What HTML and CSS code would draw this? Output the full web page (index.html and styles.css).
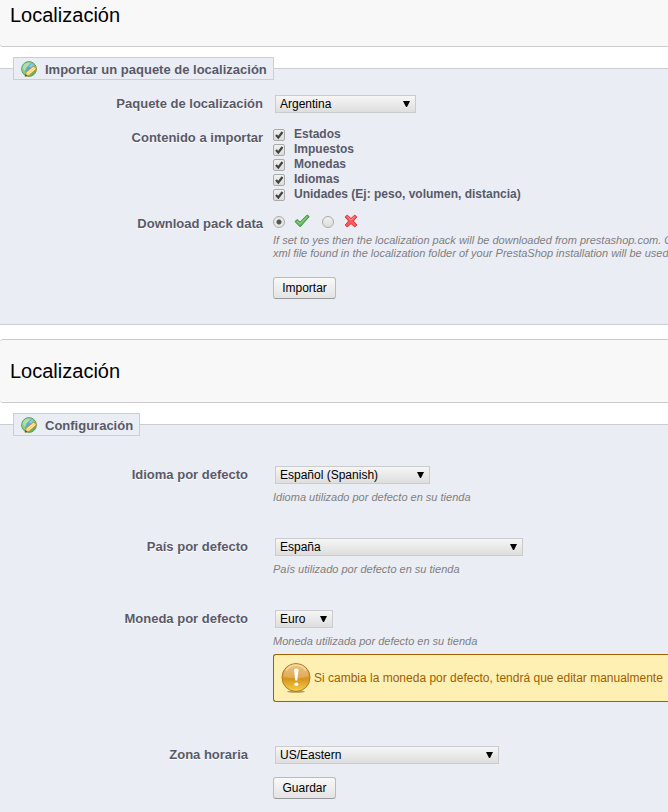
FILE: index.html
```html
<!DOCTYPE html>
<html lang="es">
<head>
  <meta charset="UTF-8">
  <title>Localización</title>
  <link rel="stylesheet" href="styles.css">
</head>
<body>
  <!-- shared icons -->
  <svg class="defs" width="0" height="0" aria-hidden="true">
    <defs>
      <linearGradient id="gGlobe" x1="0" y1="0" x2="1" y2="1">
        <stop offset="0" stop-color="#b9e2b4"/>
        <stop offset="1" stop-color="#4fa552"/>
      </linearGradient>
      <linearGradient id="gWarn" x1="0" y1="0" x2="0" y2="1">
        <stop offset="0" stop-color="#e8b765"/>
        <stop offset="0.45" stop-color="#dc9c36"/>
        <stop offset="0.55" stop-color="#d6951c"/>
        <stop offset="1" stop-color="#f6d148"/>
      </linearGradient>
      <symbol id="globe" viewBox="0 0 16 16">
        <circle cx="8" cy="8" r="7.4" fill="url(#gGlobe)" stroke="#58a35c"/>
        <path d="M4 11 Q5 6 10 2.2 Q13.5 4 14 6 L6 12 Z" fill="#58abd9"/>
        <path d="M2 7 Q3 3 7 2 L9 2 L7 5 L5 6 L4 10 Z" fill="#b5e0ac"/>
        <path d="M8 5 L11 2.5 L13 4.5 L10 7 Z" fill="#8bc9e8"/>
        <path d="M4 15.2 L5 11.3 L12 5.4 Q15 5 15.3 8 L8 14.4 Z" fill="#f6d36c" stroke="#bd8a32" stroke-width="0.8"/>
        <path d="M6 12 L13 6.6 M7.2 13.4 L14.2 7.8" stroke="#fff0b0" stroke-width="0.9"/>
        <path d="M3.8 15.6 L4.5 12.9 L6.6 14.8 Z" fill="#70442a"/>
      </symbol>
    </defs>
  </svg>

  <div class="toolbar toolbar-first">
    <h3>Localización</h3>
  </div>

  <form class="import">
    <fieldset>
      <legend><svg class="icon" width="16" height="16"><use href="#globe"/></svg>Importar un paquete de localización</legend>

      <div class="row">
        <label class="name" for="pack">Paquete de localización</label>
        <div class="field">
          <select id="pack" class="w-pack"><option>Argentina</option></select>
        </div>
      </div>

      <div class="row row-content">
        <span class="name">Contenido a importar</span>
        <div class="field checks">
          <label><input type="checkbox" checked>Estados</label>
          <label><input type="checkbox" checked>Impuestos</label>
          <label><input type="checkbox" checked>Monedas</label>
          <label><input type="checkbox" checked>Idiomas</label>
          <label><input type="checkbox" checked>Unidades (Ej: peso, volumen, distancia)</label>
        </div>
      </div>

      <div class="row row-download">
        <span class="name">Download pack data</span>
        <div class="field">
          <div class="radios">
            <input type="radio" name="download" id="download_yes" checked>
            <label for="download_yes" aria-label="Yes">
              <svg width="16" height="16" viewBox="0 0 16 16"><path d="M1 8.6 L3.2 6.6 L6 9.2 L13.2 2 L15.2 3.6 L6.2 13.8 Z" fill="#63bb5d" stroke="#3b8c3a" stroke-linejoin="round"/><path d="M3 8 L6 10.8 L13.2 3.4" fill="none" stroke="#93d88c"/></svg>
            </label>
            <input type="radio" name="download" id="download_no">
            <label for="download_no" aria-label="No">
              <svg width="16" height="16" viewBox="0 0 16 16"><path d="M2.2 4 L4.2 2 L8 5.6 L11.8 2 L13.8 4 L10.4 8 L13.8 12 L11.8 14 L8 10.6 L4.2 14 L2.2 12 L5.6 8 Z" fill="#f9585a" stroke="#dc3540" stroke-linejoin="round"/><path d="M4.2 3.6 L8 7.2 L11.8 3.6" fill="none" stroke="#ff9292"/></svg>
            </label>
          </div>
          <p class="hint">If set to yes then the localization pack will be downloaded from prestashop.com. Otherwise<br>xml file found in the localization folder of your PrestaShop installation will be used.</p>
          <button type="button" class="btn">Importar</button>
        </div>
      </div>
    </fieldset>
  </form>

  <div class="toolbar">
    <h3>Localización</h3>
  </div>

  <form class="config">
    <fieldset>
      <legend><svg class="icon" width="16" height="16"><use href="#globe"/></svg>Configuración</legend>

      <div class="row">
        <label class="name" for="lang">Idioma por defecto</label>
        <div class="field">
          <select id="lang" class="w-lang"><option>Español (Spanish)</option></select>
          <p class="hint">Idioma utilizado por defecto en su tienda</p>
        </div>
      </div>

      <div class="row">
        <label class="name" for="country">País por defecto</label>
        <div class="field">
          <select id="country" class="w-country"><option>España</option></select>
          <p class="hint">País utilizado por defecto en su tienda</p>
        </div>
      </div>

      <div class="row">
        <label class="name" for="currency">Moneda por defecto</label>
        <div class="field">
          <select id="currency" class="w-currency"><option>Euro</option></select>
          <p class="hint">Moneda utilizada por defecto en su tienda</p>
          <div class="warn">
            <svg width="30" height="30" viewBox="0 0 30 30">
              <ellipse cx="15" cy="28.6" rx="9" ry="1.2" fill="#b09a62"/>
              <circle cx="15" cy="14.5" r="14" fill="url(#gWarn)" stroke="#b27a2c"/>
              <path d="M2.5 14 A12.5 12.5 0 0 1 27.5 13 Q19 17 2.5 14 Z" fill="#fff" opacity="0.18"/>
              <path d="M5 7.5 A12.3 12.3 0 0 1 25 7.5" fill="none" stroke="#f5d9a4" stroke-width="1.5"/>
              <path d="M13 6.5 Q15.3 4.6 17.6 6.5 L16.3 17.5 H14.3 Z" fill="#fff"/>
              <ellipse cx="15.3" cy="21.2" rx="2.1" ry="1.7" fill="#fff"/>
            </svg>
            <span>Si cambia la moneda por defecto, tendrá que editar manualmente</span>
          </div>
        </div>
      </div>

      <div class="row">
        <label class="name" for="timezone">Zona horaria</label>
        <div class="field">
          <select id="timezone" class="w-zone"><option>US/Eastern</option></select>
          <button type="button" class="btn">Guardar</button>
        </div>
      </div>
    </fieldset>
  </form>
</body>
</html>
```
FILE: styles.css
```css
body {
  margin: 0;
  background: #fff;
  font-family: Arial, "Liberation Sans", sans-serif;
  font-size: 12px;
  color: #000;
  overflow: hidden;
}
.defs {
  position: absolute;
}

/* title bars */
.toolbar {
  box-sizing: border-box;
  padding: 20px 10px;
  background: #f8f8f8;
  border-top: 1px solid #ccc;
  border-bottom: 1px solid #ccc;
  border-radius: 3px 0 0 3px;
}
.toolbar-first {
  padding-top: 4px;
  border-top: 0;
  border-radius: 0 0 0 3px;
}
.toolbar h3 {
  margin: 0;
  font-size: 20px;
  line-height: 22px;
  font-weight: normal;
}

/* panels */
fieldset {
  min-width: 0;
  margin: 10px 0 14px;
  padding: 0 0 25px 13px;
  background: #ebedf4;
  border: 1px solid #ccced7;
  border-width: 1px 0;
}
legend {
  display: flex;
  align-items: center;
  box-sizing: border-box;
  height: 23px;
  padding: 2px 6px 0 7px;
  background: #ebedf4;
  border: 1px solid #ccced7;
  font-size: 13px;
  font-weight: bold;
  color: #585a69;
}
.icon {
  margin: 0 8px 2px 0;
}
.row {
  display: flex;
  gap: 10px;
}
.name {
  flex: none;
  width: 250px;
  text-align: right;
  font-size: 13px;
  line-height: 18px;
  font-weight: bold;
  color: #585a69;
  text-shadow: 0 1px 0 #fff;
}
.field {
  flex: 1;
  min-width: 0;
  white-space: nowrap;
}
.import .row {
  padding-top: 15px;
}
.import .row-content {
  padding-top: 13px;
}
.row-content .name {
  padding-top: 3px;
}
.import .row-download {
  padding-top: 14px;
}
.config .row {
  gap: 25px;
  padding-top: 30px;
}
.config .name {
  width: 235px;
}
.config .row + .row {
  padding-top: 34px;
}
.config .row:last-child {
  padding-top: 44px;
}

/* controls */
select {
  display: block;
  appearance: none;
  box-sizing: border-box;
  height: 18px;
  margin: 0 2px;
  padding: 0 16px 0 4px;
  border: 1px solid #ccc;
  border-radius: 0;
  background: url("data:image/svg+xml,%3Csvg xmlns='http://www.w3.org/2000/svg' width='7' height='6'%3E%3Cpath d='M0 0h7L4 6H3z'/%3E%3C/svg%3E") no-repeat right 5px center, linear-gradient(#f6f6f6, #dedede);
  font: 12px Arial, "Liberation Sans", sans-serif;
  color: #000;
}
.w-pack { width: 141px; }
.w-lang { width: 155px; }
.w-country { width: 248px; }
.w-currency { width: 58px; }
.w-zone { width: 224px; }

.checks label {
  display: flex;
  align-items: center;
  height: 15px;
  font-weight: bold;
  color: #585a69;
}
input {
  appearance: none;
  box-sizing: border-box;
  flex: none;
  width: 12px;
  height: 12px;
  margin: 0;
  border: 1px solid #aaa;
  background: linear-gradient(#f0f0f0, #dcdcdc);
}
input[type="checkbox"] {
  margin: 3px 9px 0 0;
  border-radius: 2px;
}
input[type="checkbox"]:checked {
  background: url("data:image/svg+xml,%3Csvg xmlns='http://www.w3.org/2000/svg' width='10' height='10'%3E%3Cpath d='M2 5l2.3 2.5L8.5 2' fill='none' stroke='%23444' stroke-width='2.2'/%3E%3C/svg%3E") no-repeat center, linear-gradient(#f0f0f0, #dcdcdc);
}
input[type="radio"] {
  border-radius: 50%;
}
input[type="radio"]:checked {
  background: radial-gradient(circle, #555 0, #555 2px, #e8e8e8 3px);
}
.radios {
  display: flex;
  align-items: center;
  height: 14px;
}
.radios label {
  height: 16px;
  margin: 0 12px 2px 9px;
}
.hint {
  margin: 0;
  font-size: 11px;
  line-height: 13px;
  font-style: italic;
  color: #7f7f7f;
}
.import .hint {
  margin: 5px 0 17px;
}
.config .hint {
  margin-top: 7px;
}
.btn {
  display: block;
  box-sizing: border-box;
  width: 63px;
  height: 22px;
  padding: 0;
  border: 1px solid #bbb;
  border-bottom-color: #999;
  border-radius: 3px;
  background: linear-gradient(#f9f9f9, #e3e3e3);
  font: 12px Arial, "Liberation Sans", sans-serif;
  color: #000;
}
select + .btn {
  margin-top: 13px;
}
.warn {
  display: flex;
  align-items: center;
  gap: 3px;
  box-sizing: border-box;
  height: 48px;
  margin-top: 6px;
  padding-left: 7px;
  background: #feefb3;
  border: 1px solid #9f6000;
  border-right: 0;
  border-radius: 3px 0 0 3px;
  color: #9f6000;
}
```
